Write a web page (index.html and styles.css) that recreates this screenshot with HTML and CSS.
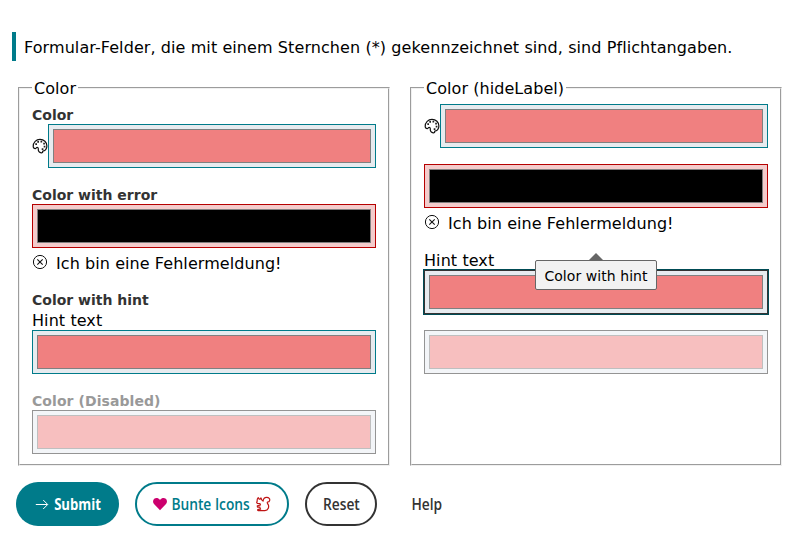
FILE: index.html
```html
<!DOCTYPE html>
<html lang="de">
<head>
<meta charset="utf-8">
<title>Color</title>
<link rel="stylesheet" href="styles.css">
</head>
<body>
<svg width="0" height="0" class="defs" aria-hidden="true">
  <symbol id="palette" viewBox="0 0 16 16">
    <path d="M1.2 8.6C1.1 4.3 4.2 1.4 8 1.4c3.900 0 6.900 2.800 6.900 6.600 0 2.600-1.700 4.700-3.300 4.800-.9.1-1.100.4-.9 1.100.1.6-.4 1-1.400.9-2.100-.2-3.200-1.500-3-3.500.1-1.500-.7-2.200-1.600-1.800-.6.3-.5 1.100-1.500 1.100-1.200 0-2-.9-2-2z" fill="none" stroke="#111" stroke-width="1.200"/>
    <path d="M3.300 5.300h1.700v1.700H3.300zM5.300 3h1.700v1.700H5.300zM8.500 2.800h1.700v1.700H8.500zM11.200 4.700h1.700v1.700h-1.700zM11.700 7.800h1.700v1.700h-1.700zM9.700 10.300h1.700v1.700H9.700z" fill="#222"/>
  </symbol>
  <symbol id="error" viewBox="0 0 16 16">
    <circle cx="8" cy="8" r="6.600" fill="none" stroke="#111"/>
    <path d="M5.300 5.300l5.400 5.400M10.700 5.300l-5.400 5.400" stroke="#111" stroke-width="1.100"/>
  </symbol>
</svg>
<p class="notice"><span>Formular-Felder, die mit einem Sternchen (*) gekennzeichnet sind, sind Pflichtangaben.</span></p>
<form class="form">
  <div class="columns">
    <fieldset>
      <legend>Color</legend>
      <div class="field">
        <div class="label">Color</div>
        <div class="row"><svg class="icon"><use href="#palette"/></svg><div class="input"><div class="swatch"></div></div></div>
      </div>
      <div class="field error">
        <div class="label">Color with error</div>
        <div class="input"><div class="swatch"></div></div>
        <div class="message"><svg class="icon"><use href="#error"/></svg><span>Ich bin eine Fehlermeldung!</span></div>
      </div>
      <div class="field hinted">
        <div class="label">Color with hint</div>
        <div class="hint">Hint text</div>
        <div class="input"><div class="swatch"></div></div>
      </div>
      <div class="field disabled">
        <div class="label">Color (Disabled)</div>
        <div class="input"><div class="swatch"></div></div>
      </div>
    </fieldset>
    <fieldset>
      <legend>Color (hideLabel)</legend>
      <div class="field">
        <div class="row"><svg class="icon"><use href="#palette"/></svg><div class="input"><div class="swatch"></div></div></div>
      </div>
      <div class="field error">
        <div class="input"><div class="swatch"></div></div>
        <div class="message"><svg class="icon"><use href="#error"/></svg><span>Ich bin eine Fehlermeldung!</span></div>
      </div>
      <div class="field focused">
        <div class="hint">Hint text</div>
        <div class="input"><div class="swatch"></div></div>
        <div class="tooltip">Color with hint</div>
      </div>
      <div class="field disabled">
        <div class="input"><div class="swatch"></div></div>
      </div>
    </fieldset>
  </div>
  <div class="actions">
    <button type="button" class="btn primary"><svg class="arrow" viewBox="0 0 14 14"><path d="M.8 7.500h11.800M8.200 3l4.500 4.500L8.200 12" fill="none" stroke="#fff" stroke-width="1"/></svg><span>Submit</span></button>
    <button type="button" class="btn secondary"><svg class="heart" viewBox="0 0 14 14"><path d="M7 13.200L1 7C-.4 5.400-.2 3 1.200 1.800 3 .5 5.300.8 7 3 8.700.8 11 .5 12.800 1.800c1.400 1.200 1.600 3.600.2 5.200z" fill="#cc006e"/></svg><span>Bunte Icons</span><svg class="squirrel" viewBox="0 0 16 16"><path d="M2.200 5.200C2 3.700 2.300 2.500 3.200 1.600l1 1.500h.9l.9-1.200.7 2 1.400 1.200C8.200 2.500 9.700 1.300 11.800 1.400c2.200.1 3.200 1.400 2.900 2.900-.2 1.200-1.400 1.700-2.300 1.700-.6.800.2 1.500.8 2.600 1 2.100.3 5.800-3.300 6H3.200c-.9-.1-.7-1.200.1-1.300l2.300-.2c-.5-.6-.8-1.200-.7-1.900L2.500 11.100 2.300 9.900 5.500 9 4.900 7.600 2.300 7.400 1.600 6.300z" fill="none" stroke="#bf1515" stroke-width="1.200" stroke-linejoin="round"/></svg></button>
    <button type="button" class="btn normal"><span>Reset</span></button>
    <button type="button" class="btn ghost"><span>Help</span></button>
  </div>
</form>
</body>
</html>
```
FILE: styles.css
```css
* { box-sizing: border-box; }
body {
  margin: 0;
  padding: 32px 16px 0 12px;
  background: #fff;
  color: #000;
  font: 16px/20px Verdana, "DejaVu Sans", sans-serif;
}
.defs { display: none; }
.notice {
  margin: 0;
  height: 29px;
  padding-left: 8px;
  border-left: 4px solid #007b8a;
  line-height: 32px;
  white-space: nowrap;
  letter-spacing: 0.084px;
}
.form { padding: 17px 0 0 4px; }
.columns { display: grid; grid-template-columns: 1fr 1fr; gap: 16px; }
fieldset {
  margin: 0 2px;
  padding: 6px 12px 10px;
  min-width: 0;
  border: 2px groove rgb(240, 240, 240);
}
legend {
  height: 20px;
  padding: 0 2px;
  line-height: 22px;
  letter-spacing: 0.06px;
  white-space: nowrap;
}
.field { position: relative; margin-bottom: 16px; }
.field:last-child { margin-bottom: 0; }
.label {
  height: 20px;
  line-height: 22px;
  font-size: 14px;
  font-weight: bold;
  color: #333;
}
.hinted .label { line-height: 20px; }
.hint { height: 20px; line-height: 22px; letter-spacing: 0.08px; }
.row { display: flex; align-items: center; }
.icon { flex: none; width: 16px; height: 16px; }
.input {
  flex: 1;
  height: 44px;
  padding: 4px;
  border: 1px solid #007b8a;
  background: #e7ebef;
}
.swatch { height: 34px; border: 1px solid #808080; background: #f08080; }
.error .input { border-color: #b60000; background: #f3cccc; }
.error .swatch { background: #000; }
.message { display: flex; align-items: flex-start; height: 26px; padding-top: 6px; letter-spacing: 0.07px; }
.message span { margin-left: 8px; }
.focused .input { border-color: #333; outline: 1px solid #004b55; }
.disabled .label { color: #999; letter-spacing: 0.07px; }
.disabled .input { border-color: #949494; background: #f3f5f8; }
.disabled .swatch { border-color: #bfbfbf; background: #f7bfbf; }
.tooltip {
  position: absolute;
  top: 10px;
  left: 111px;
  width: 122px;
  height: 30px;
  border: 1px solid #666;
  border-radius: 2px;
  background: #f2f2f2;
  font-size: 14px;
  line-height: 30px;
  letter-spacing: 0.06px;
  text-align: center;
  white-space: nowrap;
}
.tooltip::before {
  content: "";
  position: absolute;
  top: -8px;
  left: 53px;
  border: 7px solid transparent;
  border-top: 0;
  border-bottom-color: #666;
}
.actions { display: flex; gap: 16px; margin-top: 16px; }
.btn {
  display: flex;
  align-items: center;
  justify-content: center;
  height: 44px;
  padding: 0;
  border: 2px solid transparent;
  border-radius: 22px;
  background: none;
  color: #333;
  font: 600 16px/20px "Open Sans", "Noto Sans", sans-serif;
  white-space: nowrap;
}
.primary { width: 103px; background: #007b8a; color: #fff; gap: 5px; font-weight: 700; }
.secondary { width: 154px; border-color: #007b8a; color: #007b8a; gap: 5px; }
.normal { width: 72px; border-color: #333; }
.ghost { width: 67px; }
.btn svg { flex: none; }
.btn span { transform: scaleX(0.86); }
.primary span { margin: 0 -5px; transform: scaleX(0.82); }
.secondary span { margin: 0 -6.500px; }
.arrow, .heart { width: 14px; height: 14px; }
.squirrel { width: 16px; height: 16px; }
```
